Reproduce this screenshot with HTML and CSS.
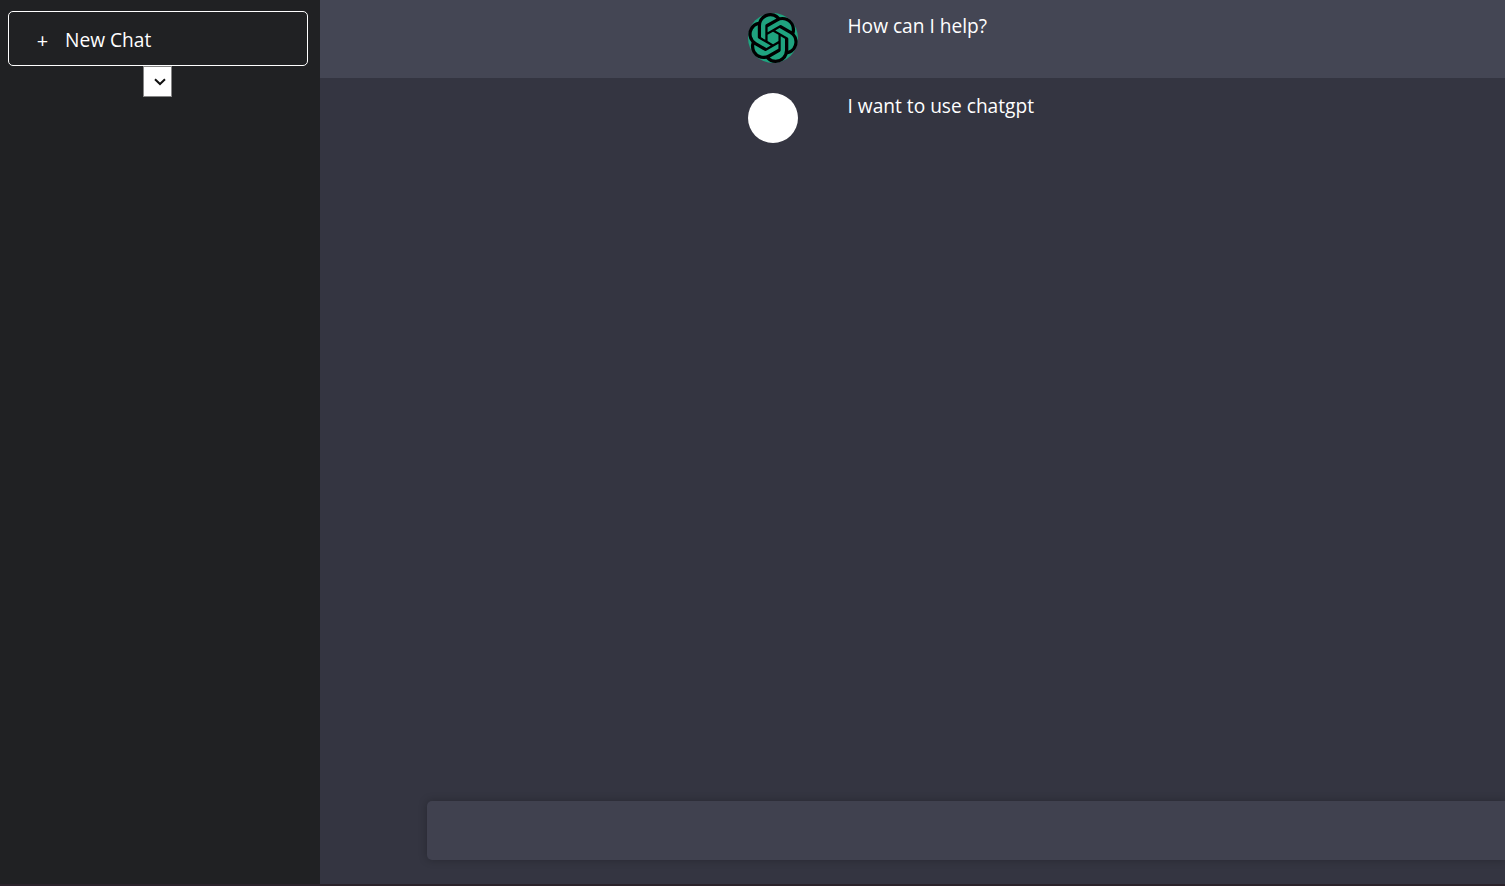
FILE: index.html
```html
<!DOCTYPE html>
<html lang="en">
<head>
    <meta charset="UTF-8">
    <meta name="viewport" content="width=device-width, initial-scale=1.0">
    <title>Chat</title>
    <link rel="stylesheet" href="styles.css">
</head>
<body>
    <div class="app">
        <!-- Side menu -->
        <aside class="sidemenu">
            <div class="new-chat-button">
                <span class="plus">+</span>
                <span class="label">New Chat</span>
            </div>
            <button class="model-select" aria-label="Model">
                <svg class="chevron" viewBox="0 0 12 8">
                    <path d="M1 1.2 L6 6 L11 1.2"/>
                </svg>
            </button>
        </aside>

        <!-- Chat -->
        <section class="chatbox">
            <div class="chat-log">
                <div class="chat-message chatgpt">
                    <div class="avatar">
                        <svg class="logo" viewBox="0 0 24 24">
                            <path d="M22.2819 9.8211a5.9847 5.9847 0 0 0-.5157-4.9108 6.0462 6.0462 0 0 0-6.5098-2.9A6.0651 6.0651 0 0 0 4.9807 4.1818a5.9847 5.9847 0 0 0-3.9977 2.9 6.0462 6.0462 0 0 0 .7427 7.0966 5.98 5.98 0 0 0 .511 4.9107 6.051 6.051 0 0 0 6.5146 2.9001A5.9847 5.9847 0 0 0 13.2599 24a6.0557 6.0557 0 0 0 5.7718-4.2058 5.9894 5.9894 0 0 0 3.9977-2.9001 6.0557 6.0557 0 0 0-.7475-7.0729zm-9.022 12.6081a4.4755 4.4755 0 0 1-2.8764-1.0408l.1419-.0804 4.7783-2.7582a.7948.7948 0 0 0 .3927-.6813v-6.7369l2.02 1.1686a.071.071 0 0 1 .038.052v5.5826a4.504 4.504 0 0 1-4.4945 4.4944zm-9.6607-4.1254a4.4708 4.4708 0 0 1-.5346-3.0137l.142.0852 4.783 2.7582a.7712.7712 0 0 0 .7806 0l5.8428-3.3685v2.3324a.0804.0804 0 0 1-.0332.0615L9.74 19.9502a4.4992 4.4992 0 0 1-6.1408-1.6464zM2.3408 7.8956a4.485 4.485 0 0 1 2.3655-1.9728V11.6a.7664.7664 0 0 0 .3879.6765l5.8144 3.3543-2.0201 1.1685a.0757.0757 0 0 1-.071 0l-4.8303-2.7865A4.504 4.504 0 0 1 2.3408 7.872zm16.5963 3.8558L13.1038 8.364 15.1192 7.2a.0757.0757 0 0 1 .071 0l4.8303 2.7913a4.4944 4.4944 0 0 1-.6765 8.1042v-5.6772a.79.79 0 0 0-.407-.667zm2.0107-3.0231l-.142-.0852-4.7735-2.7818a.7759.7759 0 0 0-.7854 0L9.409 9.2297V6.8974a.0662.0662 0 0 1 .0284-.0615l4.8303-2.7866a4.4992 4.4992 0 0 1 6.6802 4.66zM8.3065 12.863l-2.02-1.1638a.0804.0804 0 0 1-.038-.0567V6.0742a4.4992 4.4992 0 0 1 7.3757-3.4537l-.142.0805L8.704 5.459a.7948.7948 0 0 0-.3927.6813zm1.0976-2.3654l2.602-1.4998 2.6069 1.4998v2.9994l-2.5974 1.4997-2.6067-1.4997Z"/>
                        </svg>
                    </div>
                    <div class="message">How can I help?</div>
                </div>
                <div class="chat-message">
                    <div class="avatar user"></div>
                    <div class="message">I want to use chatgpt</div>
                </div>
            </div>
            <div class="chat-input-holder">
                <textarea class="chat-input" rows="1"></textarea>
            </div>
        </section>
    </div>
</body>
</html>
```

FILE: styles.css
```css
* {
    margin: 0;
    padding: 0;
    box-sizing: border-box;
}

body {
    font-family: "Segoe UI", "Open Sans", "Noto Sans", sans-serif;
    font-size: 19.15px;
    color: #fff;
    background: #343541;
}

.app {
    display: flex;
    height: 100vh;
    border-bottom: 2px solid #2b232b;
}

/* Side menu */
.sidemenu {
    width: 320px;
    flex-shrink: 0;
    padding: 11px 12px 0 8px;
    background: #202123;
    display: flex;
    flex-direction: column;
    align-items: center;
}

.new-chat-button {
    width: 100%;
    height: 55px;
    border: 1px solid #fff;
    border-radius: 5px;
    padding: 2px 28px 0 27px;
    display: flex;
    align-items: center;
    gap: 16px;
    line-height: 26px;
}

.plus {
    font-size: 20px;
    width: 13px;
    text-align: center;
    padding-top: 2px;
}

.model-select {
    width: 29px;
    height: 31px;
    margin-right: 1px;
    border: 1px solid #858585;
    background: #fff;
    display: flex;
    align-items: center;
    justify-content: flex-end;
    padding-right: 5px;
}

.chevron {
    width: 12px;
    height: 8px;
    fill: none;
    stroke: #111;
    stroke-width: 2;
}

/* Chat */
.chatbox {
    flex: 1;
    min-width: 0;
    display: flex;
    flex-direction: column;
    justify-content: space-between;
}

.chat-message {
    display: flex;
    padding: 15px 0 13px 428px;
}

.chat-message.chatgpt {
    padding-top: 13px;
    padding-bottom: 15px;
    background: #444654;
}

.avatar {
    width: 50px;
    height: 50px;
    border-radius: 50%;
    flex-shrink: 0;
    background: #1fa37f;
}

.avatar.user {
    background: #fff;
}

.logo {
    display: block;
    width: 50px;
    height: 50px;
}

.message {
    padding-left: 49.5px;
    line-height: 26px;
    white-space: nowrap;
}

.chat-input-holder {
    padding: 0 0 24px 107px;
}

.chat-input {
    display: block;
    width: 100%;
    height: 59px;
    padding: 12px;
    border: none;
    border-radius: 5px 0 0 5px;
    outline: none;
    resize: none;
    color: #fff;
    font-size: 20px;
    background: #40414f;
    box-shadow: 0 0 8px rgba(0, 0, 0, 0.25);
}
```
